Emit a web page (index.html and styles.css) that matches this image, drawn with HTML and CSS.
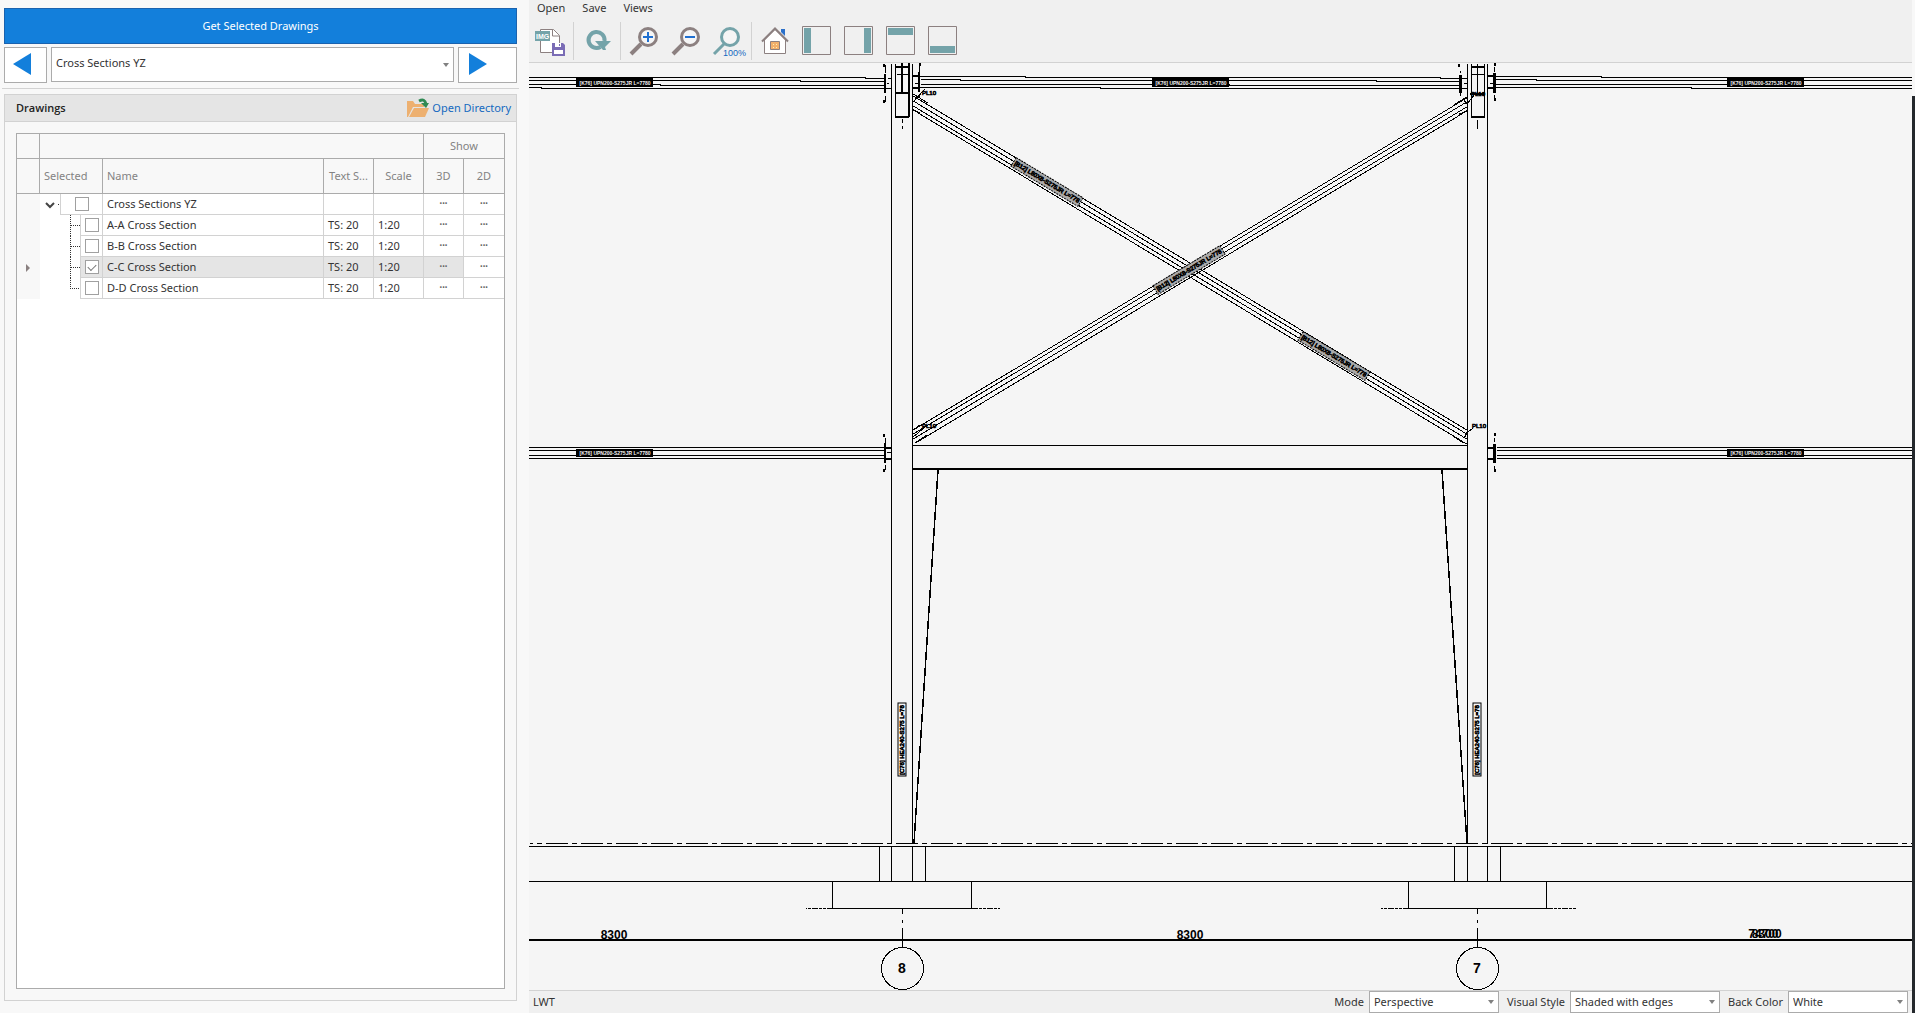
FILE: index.html
```html
<!DOCTYPE html>
<html lang="en">
<head>
<meta charset="utf-8">
<title>Drawings</title>
<link rel="stylesheet" href="styles.css">
</head>
<body>
<div class="app">
  <aside class="sidebar">
    <button class="primary" type="button">Get Selected Drawings</button>
    <div class="picker">
      <button class="step step-prev" type="button" aria-label="Previous">
        <svg width="18" height="22" viewBox="0 0 18 22"><path d="M18 0V22L0 11z"/></svg>
      </button>
      <div class="combo combo-tall">
        <select aria-label="Drawing group"><option>Cross Sections YZ</option></select>
        <svg class="caret" width="6" height="4" viewBox="0 0 6 4"><path d="M0 0H6L3 4z"/></svg>
      </div>
      <button class="step step-next" type="button" aria-label="Next">
        <svg width="18" height="22" viewBox="0 0 18 22"><path d="M0 0V22L18 11z"/></svg>
      </button>
    </div>
    <section class="group">
      <header class="group-head">
        <h2>Drawings</h2>
        <a class="open-dir" href="#">
          <svg width="24" height="20" viewBox="0 0 24 20">
            <path fill="#edb070" d="M1 19V3h6l2 3h9v3H7L2 19z"/>
            <path fill="#edb070" d="M8 10h15l-4 9H3z"/>
            <path fill="none" stroke="#2f8a53" stroke-width="3" d="M13 3c4-2 6-1 7 3"/>
            <path fill="#2f8a53" d="M15 5h8l-3 5z"/>
          </svg>
          <span>Open Directory</span>
        </a>
      </header>
      <div class="grid-box">
        <table class="grid">
          <colgroup><col class="c-ind"><col class="c-sel"><col class="c-name"><col class="c-ts"><col class="c-scale"><col class="c-3d"><col class="c-2d"></colgroup>
          <thead>
            <tr class="band"><th></th><th colspan="4"></th><th colspan="2" class="mid">Show</th></tr>
            <tr class="cols"><th></th><th>Selected</th><th>Name</th><th class="mid">Text S...</th><th class="mid">Scale</th><th class="mid">3D</th><th class="mid">2D</th></tr>
          </thead>
          <tbody>
            <tr>
              <td class="ind"></td>
              <td class="sel"><div class="tree"><svg width="20" height="21" viewBox="0 0 20 21"><path class="chev" d="M6 9l4 4 4-4"/><path class="dots" d="M18 10.500h2"/></svg><span class="tick"><input type="checkbox" aria-label="Cross Sections YZ"></span></div></td>
              <td>Cross Sections YZ</td><td></td><td></td><td class="dot3">•••</td><td class="dot3">•••</td>
            </tr>
            <tr>
              <td class="ind"></td>
              <td class="sel"><div class="tree"><svg width="40" height="21" viewBox="0 0 40 21"><path class="dots" d="M30.500 0V21M31 10.500h9"/></svg><span class="tick"><input type="checkbox" aria-label="A-A Cross Section"></span></div></td>
              <td>A-A Cross Section</td><td>TS: 20</td><td>1:20</td><td class="dot3">•••</td><td class="dot3">•••</td>
            </tr>
            <tr>
              <td class="ind"></td>
              <td class="sel"><div class="tree"><svg width="40" height="21" viewBox="0 0 40 21"><path class="dots" d="M30.500 0V21M31 10.500h9"/></svg><span class="tick"><input type="checkbox" aria-label="B-B Cross Section"></span></div></td>
              <td>B-B Cross Section</td><td>TS: 20</td><td>1:20</td><td class="dot3">•••</td><td class="dot3">•••</td>
            </tr>
            <tr class="current">
              <td class="ind"><svg width="4" height="8" viewBox="0 0 4 8"><path d="M0 0L4 4L0 8z"/></svg></td>
              <td class="sel"><div class="tree"><svg width="40" height="21" viewBox="0 0 40 21"><path class="dots" d="M30.500 0V21M31 10.500h9"/></svg><span class="tick"><input type="checkbox" checked aria-label="C-C Cross Section"></span></div></td>
              <td>C-C Cross Section</td><td>TS: 20</td><td>1:20</td><td class="dot3">•••</td><td class="dot3">•••</td>
            </tr>
            <tr>
              <td class="ind"></td>
              <td class="sel"><div class="tree"><svg width="40" height="21" viewBox="0 0 40 21"><path class="dots" d="M30.500 0V10.500H40"/></svg><span class="tick"><input type="checkbox" aria-label="D-D Cross Section"></span></div></td>
              <td>D-D Cross Section</td><td>TS: 20</td><td>1:20</td><td class="dot3">•••</td><td class="dot3">•••</td>
            </tr>
          </tbody>
        </table>
      </div>
    </section>
  </aside>

  <main class="viewer">
    <nav class="menu">
      <button type="button">Open</button><button type="button">Save</button><button type="button">Views</button>
    </nav>
    <div class="toolbar">
      <button type="button" aria-label="Save image"><svg viewBox="0 0 42 42">
        <path fill="#fff" stroke="#8c8080" stroke-width="1" d="M10.500 9.500h13l6 6v17h-19z"/><path fill="#fff" stroke="#8c8080" d="M22.500 9.500v6.500h7"/>
        <rect x="5" y="11" width="15" height="10" fill="#74a3a9"/><text class="img-word" x="6" y="19">IMG</text>
        <path fill="#7a6cb5" d="M22 23h11l2 2v11H22z"/><path fill="#fff" d="M25 23h6v4h-6zM24 30h9v4h-9z"/><path fill="#7a6cb5" d="M29 24h1v2h-1z"/>
      </svg></button>
      <i class="sep"></i>
      <button type="button" aria-label="Refresh"><svg viewBox="0 0 42 42">
        <path fill="none" stroke="#74a3a9" stroke-width="4" d="M23.500 27A8 8 0 1 1 27.500 21"/><path fill="#74a3a9" d="M18 21h16l-6 6 1 3h-3z"/>
      </svg></button>
      <i class="sep"></i>
      <button type="button" aria-label="Zoom in"><svg viewBox="0 0 42 42">
        <path stroke="#8c8080" stroke-width="4" d="M17 24L7 34"/><circle cx="24" cy="17" r="8.500" fill="#f5f5f5" stroke="#8c8080" stroke-width="3"/><path stroke="#1f6fd0" stroke-width="2" d="M19 17h10M24 12v10"/>
      </svg></button>
      <button type="button" aria-label="Zoom out"><svg viewBox="0 0 42 42">
        <path stroke="#8c8080" stroke-width="4" d="M17 24L7 34"/><circle cx="24" cy="17" r="8.500" fill="#f5f5f5" stroke="#8c8080" stroke-width="3"/><path stroke="#1f6fd0" stroke-width="2" d="M19 17h10"/>
      </svg></button>
      <button type="button" aria-label="Zoom to 100%"><svg viewBox="0 0 42 42">
        <path stroke="#74a3a9" stroke-width="3" d="M16 24L6 34"/><circle cx="22" cy="17" r="8.500" fill="#f5f5f5" stroke="#74a3a9" stroke-width="3"/><text class="pct" x="15" y="36">100%</text>
      </svg></button>
      <i class="sep"></i>
      <button type="button" aria-label="Home"><svg viewBox="0 0 42 42">
        <path fill="#2a6fc9" d="M26 9h4v7l-4-4z"/><path fill="#fff" stroke="#8c8080" d="M9.500 20V33.500h21V20L20 9.500z"/><path fill="none" stroke="#8c8080" stroke-width="2" d="M7 21.500L20 8.500 33 21.500"/>
        <path fill="#f2b06c" stroke="#8c8080" d="M15.500 21.500h9v8h-9z"/><path fill="#fff0b0" d="M18 24h1v1h-1zM21 24h1v1h-1zM18 27h1v1h-1zM21 27h1v1h-1z"/>
      </svg></button>
      <button type="button" aria-label="Left view"><svg viewBox="0 0 42 42"><path fill="none" stroke="#8c8080" d="M5.500 6.500h28v28h-28z"/><path fill="#74a3a9" d="M7 8h7v25H7z"/></svg></button>
      <button type="button" aria-label="Right view"><svg viewBox="0 0 42 42"><path fill="none" stroke="#8c8080" d="M5.500 6.500h28v28h-28z"/><path fill="#74a3a9" d="M25 8h7v25h-7z"/></svg></button>
      <button type="button" aria-label="Top view"><svg viewBox="0 0 42 42"><path fill="none" stroke="#8c8080" d="M5.500 6.500h28v28h-28z"/><path fill="#74a3a9" d="M7 8h25v7H7z"/></svg></button>
      <button type="button" aria-label="Bottom view"><svg viewBox="0 0 42 42"><path fill="none" stroke="#8c8080" d="M5.500 6.500h28v28h-28z"/><path fill="#74a3a9" d="M7 26h25v7H7z"/></svg></button>
    </div>

    <svg class="sheet" viewBox="529 63 1383 927" preserveAspectRatio="xMidYMid slice" role="img" aria-label="C-C cross section">
      <g class="ink" transform="translate(.5 .5)">
        <!-- upper girts -->
        <path d="M528 77H865V78H884M528 80H800V81H884M528 84H660V85H884M528 87H541V88H891M887 78H891M886 83H888"/>
        <path d="M912 76H1025V77H1440V78H1467M920 79H960V80H1376V81H1460M920 84H1229V85H1460M912 87H1100V88H1467M914 83H917M1463 83H1466"/>
        <path d="M1487 76H1601V77H1912M1495 79H1536V80H1912M1495 84H1757V85H1912M1487 87H1691V88H1912M1489 83H1492"/>
        <!-- middle girts -->
        <path d="M528 447H884M528 450H884M528 455H884M528 458H884M886 452H890"/>
        <path d="M1496 447H1912M1496 450H1912M1496 455H1912M1496 458H1912"/>
        <path class="bold" d="M886 448H891M886 459H891M1487 448H1495M1487 459H1495M912 76H919M912 88H919M1487 76H1494M1487 88H1494"/>
        <!-- columns, haunches and beam -->
        <path d="M891 63V843M912 63V843M1467 63V843M1487 63V843M912 445H1467"/>
        <path class="bold" d="M912 469H1467"/>
        <path class="haunch" d="M938 470L914 843M1442 470L1467 843"/>
        <!-- column heads -->
        <path d="M896 74H908M1471 74H1484M1477 63V94M902 118V122M902 125V128M1477 119V128M1471 63V117M1484 63V117M895 63V117"/>
        <path class="bold" d="M896 67H908M896 93H908M895 117H909M902 63V93M909 63V117M1471 67H1484M1471 117H1485M1470 94H1485"/>
        <!-- end plates -->
        <path class="bold" d="M885 74V93M919 72V92M885 443V463"/>
        <path class="plate" d="M1460 74V92M1494 72V92M1494 443V462"/>
        <path d="M885 64V72M885 95V101M919 65V71M919 93V97M1460 70V72M1460 92V95M1494 66V71M1494 94V98M885 437V442M885 464V469M1494 437V441M1494 465V469"/>
        <path class="bold" d="M884 64V67M884 100V103M920 63V66M1459 64V67M1495 63V66M1495 98V101M884 434V437M884 469V472M1495 433V436M1495 469V472"/>
        <!-- bracing -->
        <path d="M912 95L1467 430M912 100L1467 434M912 105L1467 439M912 109L1467 444"/>
        <path d="M912 430L1467 97M912 434L1467 101M912 439L1467 106M916 442L1467 110"/>
        <path d="M912 102L924 89M912 93L928 103M912 109L920 113M1467 96L1454 104M1467 110L1458 114M1463 98L1466 104M1467 103L1474 94M912 437L924 427M912 430L920 424M915 442L927 434M1467 432L1473 427M1467 430L1459 425M1453 436L1464 443M1464 437L1467 431"/>
        <!-- foundations -->
        <path class="axis" d="M529 843H1912"/>
        <path d="M528 846H1912M528 881H1912M879 846V881M891 846V881M912 846V881M925 846V881M1454 846V881M1467 846V881M1487 846V881M1500 846V881"/>
        <path d="M832 881V908H971V881M1408 881V908H1546V881"/>
        <path class="soil" d="M832 908H805M971 908H999M1408 908H1380M1546 908H1575"/>
        <path d="M902 908V913M902 919V922M902 927V947M1477 908V913M1477 919V922M1477 927V947"/>
        <path class="bold" d="M529 940H1913"/>
        <circle cx="902" cy="968" r="21"/><circle cx="1477" cy="968" r="21"/>
      </g>
      <g class="tags">
        <g>
          <g transform="translate(615 83)"><rect class="solid" x="-39" y="-5" width="77" height="9"/><text class="inv" y="2">[K76] UPN200-S275JR L=7780</text></g>
          <g transform="translate(1191 83)"><rect class="solid" x="-39" y="-5" width="77" height="9"/><text class="inv" y="2">[K76] UPN200-S275JR L=7780</text></g>
          <g transform="translate(1766 83)"><rect class="solid" x="-39" y="-5" width="77" height="9"/><text class="inv" y="2">[K76] UPN200-S275JR L=7780</text></g>
          <g transform="translate(615 453)"><rect class="solid" x="-39" y="-4" width="77" height="8"/><text class="inv" y="2">[K76] UPN200-S275JR L=7780</text></g>
          <g transform="translate(1766 453)"><rect class="solid" x="-39" y="-4" width="77" height="8"/><text class="inv" y="2">[K76] UPN200-S275JR L=7780</text></g>
        </g>
        <g class="heavy">
          <g transform="translate(1047 182) rotate(31)"><rect class="hatch" x="-39" y="-5" width="78" height="10"/><text y="2">[B12] L80X8-S275JR L=778</text></g>
          <g transform="translate(1334 356) rotate(31)"><rect class="hatch" x="-39" y="-5" width="78" height="10"/><text y="2">[B12] L80X8-S275JR L=778</text></g>
          <g transform="translate(1189 270) rotate(-31)"><rect class="hatch" x="-39" y="-5" width="78" height="10"/><text y="2">[B12] L80X8-S275JR L=778</text></g>
          <g transform="translate(902 740) rotate(-90)"><rect class="frame" x="-36" y="-4" width="73" height="8"/><text y="2">[C76] HEA240-S275 L=78</text></g>
          <g transform="translate(1477 740) rotate(-90)"><rect class="frame" x="-36" y="-4" width="73" height="8"/><text y="2">[C76] HEA240-S275 L=78</text></g>
          <text x="929" y="95">PL10</text><text x="1478" y="96">PL10</text><text x="929" y="428">PL10</text><text x="1479" y="428">PL10</text>
        </g>
      </g>
      <g class="dims">
        <text x="614" y="939">8300</text><text x="1190" y="939">8300</text><text x="1765" y="938">74700</text><text x="1765" y="938">8300</text>
        <text class="bubble" x="902" y="973">8</text><text class="bubble" x="1477" y="973">7</text>
      </g>
    </svg>

    <footer class="status">
      <span class="hint">LWT</span>
      <label for="mode">Mode</label>
      <div class="combo w-mode"><select id="mode"><option>Perspective</option></select><svg class="caret" width="6" height="4" viewBox="0 0 6 4"><path d="M0 0H6L3 4z"/></svg></div>
      <label for="style">Visual Style</label>
      <div class="combo w-style"><select id="style"><option>Shaded with edges</option></select><svg class="caret" width="6" height="4" viewBox="0 0 6 4"><path d="M0 0H6L3 4z"/></svg></div>
      <label for="back">Back Color</label>
      <div class="combo w-back"><select id="back"><option>White</option></select><svg class="caret" width="6" height="4" viewBox="0 0 6 4"><path d="M0 0H6L3 4z"/></svg></div>
    </footer>
  </main>
  <div class="edge"></div>
</div>
</body>
</html>
```
FILE: styles.css
```css
* { box-sizing: border-box; }
body {
  margin: 0;
  font: 11px/16px "Noto Sans", "Open Sans", sans-serif;
  color: #333;
  background: #f8f8f8;
}
button, select, input { font: inherit; color: inherit; margin: 0; }
button { padding: 0; border: 0; background: none; }
svg { display: block; }

.app { display: flex; height: 100vh; }

/* left panel */
.sidebar {
  flex: 0 0 529px;
  display: flex;
  flex-direction: column;
  padding: 8px 12px 12px 4px;
}
.primary {
  flex: none;
  height: 36px;
  border: 1px solid #1a62ae;
  background: #137fdb;
  color: #fff;
}
.picker { display: flex; gap: 4px; margin-top: 3px; height: 36px; }
.step { display: flex; align-items: center; background: #fff; border: 1px solid #ababab; padding: 0 0 3px; }
.step path { fill: #137fdb; }
.step-prev { width: 43px; padding-left: 8px; }
.step-next { width: 59px; padding-left: 10px; }

.combo { display: grid; align-items: center; }
.combo > * { grid-area: 1 / 1; }
.combo select {
  appearance: none;
  width: 100%;
  height: 100%;
  padding: 0 16px 0 4px;
  border: 1px solid #ababab;
  border-radius: 0;
  background: #fff;
}
.combo-tall { flex: 1; height: 35px; }
.combo-tall select { padding-bottom: 3px; }
.caret { justify-self: end; margin-right: 5px; pointer-events: none; }
.caret path { fill: #808080; }

.group {
  flex: 1;
  display: flex;
  flex-direction: column;
  margin-top: 11px;
  border: 1px solid #d2d2d2;
  position: relative;
}
.group::before {
  content: "";
  position: absolute;
  left: -3px;
  right: -3px;
  top: -7px;
  height: 1px;
  background: #d2d2d2;
}
.group-head {
  display: flex;
  align-items: center;
  justify-content: space-between;
  height: 27px;
  padding: 0 5px 0 11px;
  background: #e5e5e5;
  border-bottom: 1px solid #d2d2d2;
}
.group-head h2 { margin: 0; font: 600 11px/16px "Open Sans", sans-serif; color: #222; }
.open-dir { display: flex; align-items: center; gap: 2px; color: #1469c0; text-decoration: none; }

.grid-box { flex: 1; margin: 11px; background: #fff; border: 1px solid #ababab; }
.grid { width: 100%; table-layout: fixed; border-collapse: separate; border-spacing: 0; }
.c-ind { width: 23px; } .c-sel { width: 63px; } .c-ts, .c-scale { width: 50px; } .c-3d, .c-2d { width: 40px; }
.grid th {
  padding: 0 4px;
  background: #f8f8f8;
  border: solid #ababab;
  border-width: 0 1px 1px 0;
  color: #838383;
  font-weight: 400;
  text-align: left;
  white-space: nowrap;
}
.grid th:last-child, .grid td:last-child { border-right: 0; }
.grid th.mid { padding: 0; text-align: center; }
.band th { height: 25px; }
.cols th { height: 35px; }
.grid td {
  height: 21px;
  padding: 0 4px;
  border: solid #d2d2d2;
  border-width: 0 1px 1px 0;
  line-height: 20px;
  white-space: nowrap;
}
.grid td.dot3 { padding: 0; text-align: center; font-size: 7px; color: #666; }
.grid td.ind { padding: 0 0 0 9px; border: 0; background: #f8f8f8; }
.ind path { fill: #8a8080; }
.grid td.sel { padding: 0; border-bottom: 0; }
.tree { display: flex; height: 21px; }
.tick { flex: 1; display: grid; place-items: center; border: solid #d2d2d2; border-width: 0 0 1px 1px; }
.tick input {
  appearance: none;
  display: grid;
  place-items: center;
  width: 14px;
  height: 14px;
  border: 1px solid #a0a0a0;
  background: #fff;
}
.tick input:checked::before {
  content: "";
  width: 7px;
  height: 4px;
  margin-bottom: 2px;
  border: solid #777;
  border-width: 0 0 1px 1px;
  transform: rotate(-45deg);
}
.chev { fill: none; stroke: #444; stroke-width: 2; }
.dots { fill: none; stroke: #333; stroke-dasharray: 1 1; shape-rendering: crispEdges; }
.current td:nth-child(n+3):nth-child(-n+6), .current .tick { background: #e5e5e5; }

/* viewer */
.viewer { flex: 1; min-width: 0; display: flex; flex-direction: column; background: #f0f0f0; }
.menu { display: flex; gap: 17px; height: 20px; padding: 0 8px 4px; }
.toolbar { display: flex; flex: none; height: 43px; padding-left: 1px; border-bottom: 1px solid #d2d2d2; }
.toolbar button { width: 42px; height: 42px; }
.toolbar svg { width: 42px; height: 42px; }
.sep { width: 1px; height: 38px; margin: 2px 3px 0 1px; background: #d2d2d2; }
.img-word { font: 700 7px "Liberation Sans", sans-serif; fill: #fff; }
.pct { font: 9px "Liberation Sans", sans-serif; fill: #1469c0; }

.sheet { flex: 1; min-height: 0; width: 100%; background: #f5f5f5; }
.ink { fill: none; stroke: #000; stroke-width: 1; shape-rendering: crispEdges; }
/* even-width strokes are centred on pixel edges, not pixel centres */
.ink .bold { stroke-width: 2; transform: translate(-.5px, -.5px); }
.ink .haunch { stroke-width: 1.5; transform: translate(-.5px, -.5px); }
.ink .plate { stroke-width: 3; }
.axis { stroke-dasharray: 22 4 5 4; stroke-dashoffset: 19; }
.soil { stroke-dasharray: 6 1 3 1 3 1; }
.tags text { font: 700 5px "Liberation Sans", sans-serif; text-anchor: middle; }
.tags .inv { fill: #f5f5f5; }
.tags .heavy text { font-weight: 400; font-size: 6px; stroke: #000; stroke-width: .7; }
.hatch { fill: #aaa; stroke: #000; stroke-dasharray: 2 1; }
.frame { fill: none; stroke: #000; }
.dims text { font: 700 12px "Liberation Sans", sans-serif; text-anchor: middle; }
.dims .bubble { font-size: 14px; }

.status {
  display: flex;
  flex: none;
  align-items: center;
  height: 23px;
  padding-right: 4px;
  border-top: 1px solid #d2d2d2;
}
.hint { margin-right: auto; padding-left: 4px; }
.status label { margin: 0 5px 0 8px; }
.status .combo { height: 22px; }
.w-mode { width: 130px; }
.w-style { width: 150px; }
.w-back { width: 120px; }

.edge { flex: 0 0 3px; margin-top: 96px; background: #24282c; }
```
